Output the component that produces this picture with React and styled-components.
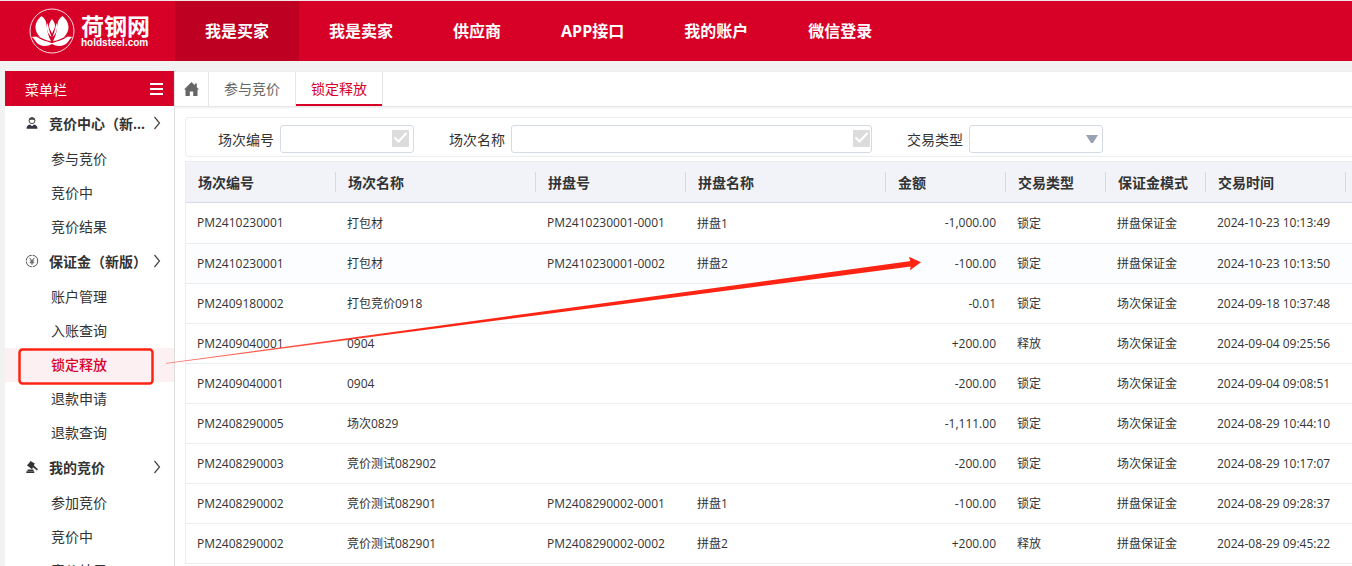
import React, { useState } from 'react';
import styled, { createGlobalStyle } from 'styled-components';

const GlobalStyle = createGlobalStyle`
  * {
    box-sizing: border-box;
  }

  body {
    margin: 0;
    background: #f2f2f2;
    color: #333333;
    font-family: 'Open Sans', 'Noto Sans CJK SC', sans-serif;
    font-size: 14px;
  }

  button, input, select {
    font: inherit;
    color: inherit;
  }

  a {
    color: inherit;
    text-decoration: none;
  }
`;

const Page = styled.div`
  position: relative;
  display: flex;
  flex-direction: column;
  height: 100vh;
  overflow: hidden;
`;

const TopBar = styled.header`
  display: flex;
  flex: none;
  height: 61px;
  border-top: 1px solid #f2e6e8;
  background: #d70027;
  color: #ffffff;
`;

const Logo = styled.a`
  display: flex;
  align-items: center;
  width: 175px;
  padding-left: 29px;
`;

const LogoMark = styled.svg`
  width: 46px;
  height: 46px;
  margin-right: 6px;
`;

const LogoText = styled.span`
  display: flex;
  flex-direction: column;
`;

const LogoName = styled.span`
  font-size: 23px;
  font-weight: 700;
  line-height: 24px;
`;

const LogoDomain = styled.span`
  font-family: 'Liberation Sans', sans-serif;
  font-size: 10px;
  font-weight: 700;
  line-height: 10px;
`;

const Nav = styled.nav`
  display: flex;
`;

const NavLink = styled.a`
  display: flex;
  align-items: center;
  padding: 0 30px 2px;
  font-size: 16px;
  font-weight: 700;
  white-space: nowrap;
  background: ${props => props.$active ? '#be0022' : 'transparent'};
`;

const Body = styled.div`
  display: flex;
  flex: 1;
  min-height: 0;
  padding: 10px 0 0 5px;
`;

const Sidebar = styled.aside`
  flex: none;
  width: 170px;
  border-right: 1px solid #dddddd;
  background: #ffffff;
  overflow: hidden;
`;

const SidebarHeader = styled.div`
  display: flex;
  align-items: center;
  justify-content: space-between;
  height: 35px;
  padding: 0 11px 0 20px;
  background: #d70027;
  color: #ffffff;
`;

const IconButton = styled.button`
  display: flex;
  padding: 0;
  border: 0;
  background: transparent;
  cursor: pointer;
`;

const MenuGroup = styled.button`
  display: flex;
  align-items: center;
  width: 100%;
  height: 36px;
  padding: 0 13px 2px 20px;
  border: 0;
  background: transparent;
  font-weight: 700;
  text-align: left;
  cursor: pointer;
`;

const MenuGroupLabel = styled.span`
  flex: 1;
  margin: 0 4px 0 10px;
  overflow: hidden;
  text-overflow: ellipsis;
  white-space: nowrap;
`;

const MenuList = styled.ul`
  margin: 0;
  padding: 0;
  list-style: none;
`;

const MenuLink = styled.a`
  display: block;
  height: 34px;
  padding-left: 46px;
  line-height: 34px;
  color: ${props => props.$active ? '#d70027' : '#333333'};
  font-weight: ${props => props.$active ? 500 : 400};
  background: ${props => props.$active ? '#fdf0f2' : 'transparent'};
`;

const Main = styled.main`
  flex: 1;
  min-width: 0;
  background: #ffffff;
`;

const TabBar = styled.div`
  display: flex;
  height: 36px;
  border-top: 1px solid #eeeeee;
  border-bottom: 1px solid #e8e8e8;
  box-shadow: 0 1px 2px #eeeeee;
`;

const Tab = styled.button`
  display: flex;
  align-items: center;
  padding: 0 ${props => props.$compact ? 8 : 15}px 2px;
  border: 0;
  border-right: 1px solid #e6e6e6;
  background: transparent;
  color: ${props => props.$active ? '#d70027' : '#666666'};
  box-shadow: ${props => props.$active ? 'inset 0 -2px #d70027' : 'none'};
  cursor: pointer;
`;

const Content = styled.div`
  padding: 10px 0 0 10px;
`;

const Filters = styled.form`
  display: flex;
  align-items: center;
  gap: 35px;
  height: 40px;
  margin-bottom: 4px;
  padding: 3px 0 0 32px;
  border: 1px solid #ebedf0;
  border-right: 0;
  border-radius: 4px 0 0 4px;
`;

const Field = styled.div`
  display: flex;
  align-items: center;
  gap: 6px;
`;

const ControlBox = styled.span`
  display: flex;
  align-items: center;
  width: ${props => props.$wide ? 361 : 134}px;
  height: 28px;
  padding-right: ${props => props.$wide ? 1 : 4}px;
  border: 1px solid #d5dbe4;
  border-radius: 3px;
`;

const TextInput = styled.input`
  flex: 1;
  min-width: 0;
  height: 26px;
  padding: 0 6px;
  border: 0;
  outline: 0;
  background: transparent;
`;

const Select = styled.select`
  flex: 1;
  min-width: 0;
  height: 26px;
  padding: 0 6px;
  border: 0;
  outline: 0;
  appearance: none;
  background: transparent;
`;

const Grid = styled.table`
  width: 100%;
  border-collapse: separate;
  border-spacing: 0;
  border-left: 1px solid #ebedf0;
  table-layout: fixed;
`;

const HeadCell = styled.th`
  height: 42px;
  padding: 0;
  border-top: 1px solid #ebedf0;
  border-bottom: 1px solid #d5dae6;
  background: #f2f3f9;
  font-weight: 700;
  text-align: left;
  white-space: nowrap;
`;

const HeadLabel = styled.span`
  display: block;
  height: 20px;
  padding-left: 12px;
  border-right: 1px solid #d5dae2;
  line-height: 22px;
`;

const Cell = styled.td`
  height: 40px;
  padding: 0 10px 1px 11px;
  border-bottom: 1px solid #ebedf0;
  font-size: 12px;
  text-align: ${props => props.$right ? 'right' : 'left'};
  white-space: nowrap;
`;

const Row = styled.tr`
  background: ${props => props.$current ? '#fbfdff' : '#ffffff'};

  &:first-child ${Cell} {
    height: 41px;
  }
`;

const Annotation = styled.svg`
  position: absolute;
  top: 0;
  left: 0;
  pointer-events: none;
`;

const navItems = ['我是买家', '我是卖家', '供应商', 'APP接口', '我的账户', '微信登录'];

const menu = [
  { title: '竞价中心（新版）', icon: 'user', items: ['参与竞价', '竞价中', '竞价结果'] },
  { title: '保证金（新版）', icon: 'yen', items: ['账户管理', '入账查询', '锁定释放', '退款申请', '退款查询'] },
  { title: '我的竞价', icon: 'gavel', items: ['参加竞价', '竞价中', '竞价结果'] },
];

const columns = [
  { title: '场次编号', width: 150 },
  { title: '场次名称', width: 200 },
  { title: '拼盘号', width: 150 },
  { title: '拼盘名称', width: 200 },
  { title: '金额', width: 120, right: true },
  { title: '交易类型', width: 100 },
  { title: '保证金模式', width: 100 },
  { title: '交易时间', width: 140 },
];

const rows = [
  ['PM2410230001', '打包材', 'PM2410230001-0001', '拼盘1', '-1,000.00', '锁定', '拼盘保证金', '2024-10-23 10:13:49'],
  ['PM2410230001', '打包材', 'PM2410230001-0002', '拼盘2', '-100.00', '锁定', '拼盘保证金', '2024-10-23 10:13:50'],
  ['PM2409180002', '打包竞价0918', '', '', '-0.01', '锁定', '场次保证金', '2024-09-18 10:37:48'],
  ['PM2409040001', '0904', '', '', '+200.00', '释放', '场次保证金', '2024-09-04 09:25:56'],
  ['PM2409040001', '0904', '', '', '-200.00', '锁定', '场次保证金', '2024-09-04 09:08:51'],
  ['PM2408290005', '场次0829', '', '', '-1,111.00', '锁定', '场次保证金', '2024-08-29 10:44:10'],
  ['PM2408290003', '竞价测试082902', '', '', '-200.00', '锁定', '场次保证金', '2024-08-29 10:17:07'],
  ['PM2408290002', '竞价测试082901', 'PM2408290002-0001', '拼盘1', '-100.00', '锁定', '拼盘保证金', '2024-08-29 09:28:37'],
  ['PM2408290002', '竞价测试082901', 'PM2408290002-0002', '拼盘2', '+200.00', '释放', '拼盘保证金', '2024-08-29 09:45:22'],
];

const LotusIcon = () => <LogoMark viewBox="0 0 46 46" aria-hidden="true">
  <circle cx="23" cy="23" r="22" fill="none" stroke="#fff" strokeWidth="1" opacity="0.85"/>
  <g fill="#fff">
    <path d="M12.500 8C17 11 17.500 15 18 20c.4 4.500 1.500 8.500 4 13C13 32 7 27 6.500 20 6.300 15 9 11 12.500 8z"/>
    <path d="M33.500 8C29 11 28.500 15 28 20c-.4 4.500-1.500 8.500-4 13 9-1 15-6 15.500-13 .2-5-2.500-9-6-12z"/>
    <path d="M18.500 15c1 3 1.500 8 4 14-4-3-5.500-9-4-14zM27.500 15c-1 3-1.500 8-4 14 4-3 5.500-9 4-14z"/>
    <path d="M23 11c2.800 3.500 3.600 6 2.600 9-.7 2-2 3.500-2.600 6-.6-2.500-1.900-4-2.600-6-1-3-.2-5.500 2.600-9z"/>
    <path d="M2.500 29c6-1.500 13-.5 20.500 5.500C30.500 28.500 37.500 27.500 43.500 29c-2 1-3 2.500-4.500 5-3.500 4.500-11 5-16 2-5 3-12.500 2.500-16-2-1.500-2.500-2.500-4-4.500-5z"/>
  </g>
  <path d="M4 25c4 5 11 7 19 9.500C31 32 38 30 42 25" fill="none" stroke="#d70027" strokeWidth="1.200"/>
</LogoMark>;

const groupIcons = {
  user: <svg width="14" height="14" viewBox="0 0 14 14" aria-hidden="true">
    <circle cx="7" cy="4.6" r="3" fill="#fff" stroke="#444" strokeWidth="1"/>
    <path d="M4 4.500C4 2.400 5 1.400 7 1.400s3 1 3 3.100C9 4 8.500 3.800 7 3.800S5 4 4 4.500z" fill="#444"/>
    <path d="M1.500 12.800c0-2.600 1.500-4 3.500-4.300l2 1.800 2-1.800c2 .3 3.500 1.700 3.500 4.300z" fill="#2f3440"/>
  </svg>,
  yen: <svg width="14" height="14" viewBox="0 0 14 14" fill="none" stroke="#555" aria-hidden="true">
    <circle cx="7" cy="7" r="5.700" strokeDasharray="8 0.950" strokeWidth="1"/>
    <path d="M4.600 3.800L7 6.800l2.400-3M7 6.800V10.800M4.800 7h4.400M4.800 8.700h4.400" strokeWidth="1"/>
  </svg>,
  gavel: <svg width="14" height="14" viewBox="0 0 14 14" fill="#333" aria-hidden="true">
    <path d="M5.500 1l4.300 2.500-2.600 5-4.600-3z"/>
    <path d="M2 5.300l2-2 3.800 5-1.300.8z"/>
    <path d="M8.200 4.800l4.700 4.400-1 1.300-4.800-4.100z"/>
    <path d="M2.500 9.500h6v1.500h-6zM1.300 11.300h8V13h-8z"/>
  </svg>,
};

const ChevronIcon = () => <svg width="8" height="14" viewBox="0 0 8 14" fill="none" stroke="#444" aria-hidden="true">
  <path d="M1.500 1l5 6-5 6" strokeWidth="1.200"/>
</svg>;

const CheckIcon = () => <svg width="17" height="17" viewBox="0 0 17 17" aria-hidden="true">
  <rect width="17" height="17" rx="1" fill="#dcdcdc"/>
  <path d="M2.500 7.500l4 4 8-8.500" fill="none" stroke="#fff" strokeWidth="2.200"/>
</svg>;

const TextField = ({ id, label, wide }) => <Field>
  <label htmlFor={id}>{label}</label>
  <ControlBox $wide={wide}>
    <TextInput id={id} type="text"/>
    <IconButton type="button" aria-label={label}><CheckIcon/></IconButton>
  </ControlBox>
</Field>;

const SideMenu = () => <Sidebar>
  <SidebarHeader>
    菜单栏
    <IconButton type="button" aria-label="菜单栏">
      <svg width="13" height="12" viewBox="0 0 13 12" fill="#fff" aria-hidden="true">
        <path d="M0 0h13v2H0zM0 5h13v2H0zM0 10h13v2H0z"/>
      </svg>
    </IconButton>
  </SidebarHeader>
  {menu.map(group => <div key={group.title}>
    <MenuGroup type="button">
      {groupIcons[group.icon]}
      <MenuGroupLabel>{group.title}</MenuGroupLabel>
      <ChevronIcon/>
    </MenuGroup>
    <MenuList>
      {group.items.map(item => <li key={item}>
        <MenuLink href="#" $active={item === '锁定释放'}>{item}</MenuLink>
      </li>)}
    </MenuList>
  </div>)}
</Sidebar>;

const RecordTable = () => <Grid>
  <colgroup>
    {columns.map(column => <col key={column.title} width={column.width}/>)}
    <col/>
  </colgroup>
  <thead>
    <tr>
      {columns.map(column => <HeadCell key={column.title}>
        <HeadLabel>{column.title}</HeadLabel>
      </HeadCell>)}
      <HeadCell as="td"/>
    </tr>
  </thead>
  <tbody>
    {rows.map((row, index) => <Row key={index} $current={index === 1}>
      {row.map((value, i) => <Cell key={i} $right={columns[i].right}>{value}</Cell>)}
      <Cell/>
    </Row>)}
  </tbody>
</Grid>;

const App = () => {
  const [tab, setTab] = useState('锁定释放');

  return (
    <Page>
      <GlobalStyle/>
      <TopBar>
        <Logo href="#">
          <LotusIcon/>
          <LogoText>
            <LogoName>荷钢网</LogoName>
            <LogoDomain>holdsteel.com</LogoDomain>
          </LogoText>
        </Logo>
        <Nav>
          {navItems.map((item, index) => <NavLink key={item} href="#" $active={index === 0}>{item}</NavLink>)}
        </Nav>
      </TopBar>
      <Body>
        <SideMenu/>
        <Main>
          <TabBar>
            <Tab type="button" $compact aria-label="首页">
              <svg width="17" height="16" viewBox="0 0 17 16" fill="#666" aria-hidden="true">
                <path d="M8.500 2L1 9.500h1.500V16h4.300v-4.500h3.400V16h4.300V9.500H16L13.800 7.300V3.500h-2v1.800z"/>
              </svg>
            </Tab>
            {['参与竞价', '锁定释放'].map(name => <Tab
              key={name}
              type="button"
              $active={tab === name}
              onClick={() => setTab(name)}
            >
              {name}
            </Tab>)}
          </TabBar>
          <Content>
            <Filters>
              <TextField id="sessionNo" label="场次编号"/>
              <TextField id="sessionName" label="场次名称" wide/>
              <Field>
                <label htmlFor="tradeType">交易类型</label>
                <ControlBox>
                  <Select id="tradeType"/>
                  <svg width="12" height="8" viewBox="0 0 12 8" fill="#98a2b3" aria-hidden="true">
                    <path d="M0 0h12L7 8H5z"/>
                  </svg>
                </ControlBox>
              </Field>
            </Filters>
            <RecordTable/>
          </Content>
        </Main>
      </Body>
      <Annotation width="960" height="420" viewBox="0 0 960 420" aria-hidden="true">
        <defs>
          <linearGradient id="tail" x1="166" y1="0" x2="420" y2="0" gradientUnits="userSpaceOnUse">
            <stop offset="0" stopColor="#fe2414" stopOpacity="0.600"/>
            <stop offset="1" stopColor="#fe2414"/>
          </linearGradient>
        </defs>
        <rect x="19.500" y="349.500" width="133" height="34" rx="3" fill="none" stroke="#fe2414" strokeWidth="2.500"/>
        <path d="M166 363L911 261v5.500L166 363.700z" fill="url(#tail)"/>
        <path d="M921 262.300L909 256.800l2 7-1 6.400z" fill="#fe2414"/>
      </Annotation>
    </Page>
  );
};

export default App;
